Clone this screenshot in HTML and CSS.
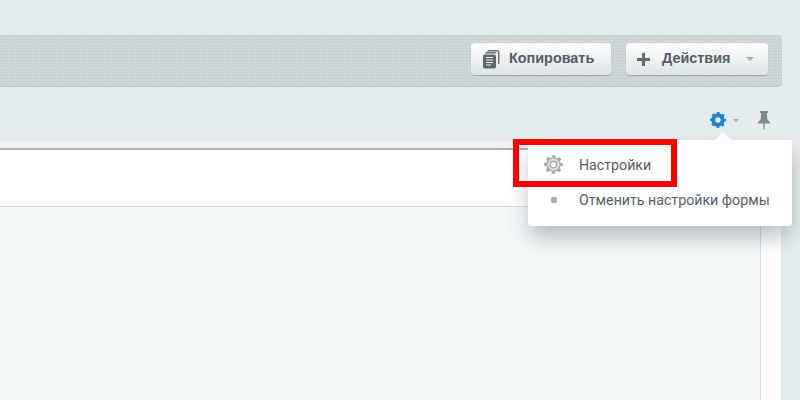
FILE: index.html
```html
<!DOCTYPE html>
<html lang="ru">
<head>
<meta charset="utf-8">
<title>Настройки</title>
<link rel="stylesheet" href="styles.css">
</head>
<body>
<div class="toolbar">
  <button class="btn btn-copy">
    <svg class="ic-copy" width="18" height="20" viewBox="0 0 18 20"><path d="M5 2.500C5 1.500 6 1 7 1h8c1.500 0 2.500 1 2.500 2.500v10c0 1-.5 1.500-1.500 1.500V3.500c0-.5-.5-1-1-1z" fill="#6a7376"/><path d="M3 4.500C3 3.500 4 3 5 3h8c1 0 1.500.5 1.500 1.500H5c-1 0-2 0-2 0z" fill="#6a7376"/><rect x="1" y="5.500" width="13" height="14" rx="2" fill="#5e686b"/><path d="M4 8.500h7M4 11h7M4 13.500h7M4 16h5" stroke="#e9eeef" stroke-width="1.200"/></svg>
    <span>Копировать</span>
  </button>
  <button class="btn btn-act">
    <svg class="ic-plus" width="13" height="13" viewBox="0 0 13 13"><path d="M5 0h3v5h5v3H8v5H5V8H0V5h5z" fill="#626c6f"/></svg>
    <span>Действия</span>
    <i class="caret caret-btn"></i>
  </button>
</div>
<div class="tools">
  <svg class="ic-gear" width="16" height="16" viewBox="0 0 24 24"><circle cx="12" cy="12" r="7" fill="none" stroke="#1f82cf" stroke-width="6"/><circle cx="12" cy="12" r="10" fill="none" stroke="#1f82cf" stroke-width="4" stroke-dasharray="3.930 3.930" stroke-dashoffset="1.960"/></svg>
  <i class="caret caret-tool"></i>
  <svg class="ic-pin" width="12" height="19" viewBox="0 0 12 19"><path d="M2 0h8v2H8.800l.6 6.500L12 11v1.500H6.800L6.400 19h-.8l-.4-6.500H0V11l2.600-2.500L3.200 2H2z" fill="#7f8a8d"/></svg>
</div>
<div class="card">
  <div class="card-strip"></div>
  <div class="card-head"></div>
  <div class="card-body">
    <div class="card-main"></div>
    <div class="card-side"></div>
  </div>
</div>
<div class="menu">
  <div class="menu-item">
    <span class="menu-icon"><svg width="19" height="19" viewBox="0 0 24 24"><circle cx="12" cy="12" r="8.500" fill="#d9dbdc" stroke="#a0a4a6" stroke-width="1.500"/><circle cx="12" cy="12" r="10.200" fill="none" stroke="#a0a4a6" stroke-width="3.200" stroke-dasharray="4 4.010" stroke-dashoffset="2"/><circle cx="12" cy="12" r="4" fill="#fff" stroke="#a0a4a6" stroke-width="1.500"/></svg></span>
    <span>Настройки</span>
  </div>
  <div class="menu-item">
    <span class="menu-icon"><i class="dot"></i></span>
    <span>Отменить настройки формы</span>
  </div>
</div>
<div class="highlight"></div>
</body>
</html>
```
FILE: styles.css
```css
html, body { height: 100%; }
body {
  margin: 0;
  height: 400px;
  overflow: hidden;
  position: relative;
  background: #e5ecee;
  font-family: "Liberation Sans", Arial, sans-serif;
  padding-top: 35px;
  box-sizing: border-box;
}
.toolbar {
  height: 52px;
  margin-right: 18px;
  box-sizing: border-box;
  padding: 8px 14px 0 0;
  display: flex;
  justify-content: flex-end;
  gap: 15px;
  border-radius: 0 4px 4px 0;
  border-bottom: 1px solid #bcc6c8;
  background-color: #cdd6d9;
  background-image: radial-gradient(#b9c4c7 0.7px, transparent 0.8px);
  background-size: 3px 3px;
}
.btn {
  height: 32px;
  border: 0;
  padding: 0;
  display: flex;
  align-items: center;
  border-radius: 4px;
  background: linear-gradient(#fdfefe, #dde5e7);
  box-shadow: 0 1px 1px #9aa5a8;
  font: bold 14.4px "Liberation Sans", Arial, sans-serif;
  color: #535c69;
}
.btn span { position: relative; top: -1px; }
.btn-copy { width: 140px; padding-left: 11px; }
.btn-copy span { margin-left: 9px; }
.btn-act { width: 142px; padding-left: 11px; }
.btn-act span { margin-left: 12px; }
.caret {
  display: block;
  width: 0;
  height: 0;
  border-style: solid;
  border-color: #a3acaf transparent transparent;
}
.caret-btn { border-width: 4px 4px 0; margin-left: 16px; }
.tools {
  height: 63px;
  position: relative;
  display: flex;
  align-items: flex-start;
  justify-content: flex-end;
  padding-right: 30px;
  padding-top: 24px;
  box-sizing: border-box;
}
.ic-gear { margin-right: 7px; margin-top: 1px; }
.caret-tool { border-width: 3px 3px 0; margin-top: 8px; margin-right: 19px; }
.card {
  position: absolute;
  left: 0;
  right: 19px;
  top: 142px;
  bottom: 0;
  display: flex;
  flex-direction: column;
}
.card-strip { height: 6px; background: #eff3f4; }
.card-head {
  background: #fff;
  border-top: 2px solid #aab4b6;
  border-bottom: 1px solid #cfdadb;
  box-sizing: border-box;
  height: 59px;
}
.card-body { flex: 1; display: flex; }
.card-main { flex: 1; background: #f4f8f9; border-right: 1px solid #cfdfe4; }
.card-side { width: 20px; background: #fff; }
.menu {
  position: absolute;
  left: 528px;
  top: 140px;
  width: 264px;
  height: 86px;
  box-sizing: border-box;
  padding-top: 7px;
  background: #fff;
  border-radius: 3px;
  box-shadow: 0 12px 22px -2px rgba(60, 80, 85, .38);
  font: 14.2px Roboto, "Liberation Sans", sans-serif;
  color: #535c69;
}
.menu::before {
  content: "";
  position: absolute;
  left: 187px;
  top: -8px;
  border-style: solid;
  border-width: 0 8px 8px;
  border-color: transparent transparent #fff;
}
.menu-item { height: 35px; display: flex; align-items: center; }
.menu-icon {
  width: 51px;
  padding-left: 16px;
  box-sizing: border-box;
  display: flex;
  align-items: center;
}
.dot {
  display: block;
  width: 6px;
  height: 6px;
  margin-left: 7px;
  border-radius: 2px;
  background: #a5adbb;
}
.highlight {
  position: absolute;
  left: 513px;
  top: 139px;
  width: 164px;
  height: 48px;
  box-sizing: border-box;
  border: 6px solid #f00;
}
```
